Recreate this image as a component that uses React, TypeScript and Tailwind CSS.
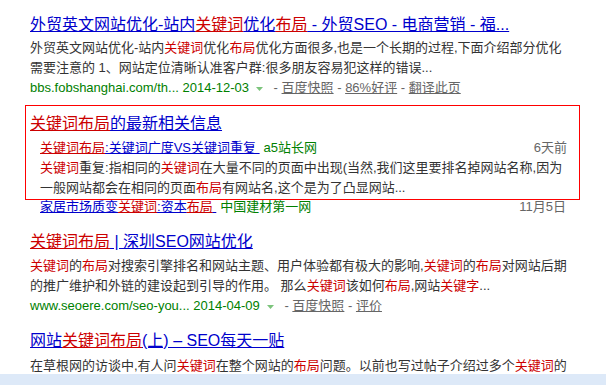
import React from "react";

const R = ({ children }: { children: React.ReactNode }) => (
  <span className="text-[#cc0000]">{children}</span>
);

const TR = ({ children }: { children: React.ReactNode }) => (
  <span className="text-[#cc0000] underline">{children}</span>
);

const Arrow = () => (
  <svg width="7" height="4" viewBox="0 0 7 4" className="mx-[7px] inline-block align-middle">
    <path d="M0 0 H7 L3.5 4 Z" fill="#7cc47c" />
  </svg>
);

const Sep = () => <span className="text-[#666]"> - </span>;

const Gray = ({ children }: { children: React.ReactNode }) => (
  <span className="text-[#666] underline">{children}</span>
);

const App = () => {
  return (
    <div className="relative h-[385px] w-[606px] overflow-hidden bg-white pl-[25px] pt-[14px] font-['Liberation_Sans','Noto_Sans_CJK_SC',sans-serif]">
      {/* result 1 */}
      <div className="ml-[5px]">
        <div className="whitespace-nowrap text-[16px] leading-[22px] text-[#0000cc] underline">
          外贸英文网站优化-站内<TR>关键词</TR>优化<TR>布局</TR> - 外贸SEO - 电商营销 - 福...
        </div>
        <div className="mt-[2px] whitespace-nowrap text-[13px] leading-[20px] text-[#333]">
          <div>
            外贸英文网站优化-站内<R>关键词</R>优化<R>布局</R>优化方面很多,也是一个长期的过程,下面介绍部分优化
          </div>
          <div>需要注意的 1、网站定位清晰认准客户群:很多朋友容易犯这样的错误...</div>
        </div>
        <div className="whitespace-nowrap text-[13px] leading-[20px]">
          <span className="text-[#008000]">bbs.fobshanghai.com/th... 2014-12-03</span>
          <Arrow />
          <Sep />
          <Gray>百度快照</Gray>
          <Sep />
          <Gray>86%好评</Gray>
          <Sep />
          <Gray>翻译此页</Gray>
        </div>
      </div>

      {/* news box */}
      <div className="mt-[7px] w-[555px] bg-[#ff0000] p-[1px]">
        <div className="bg-white pb-[1px] pl-[4px] pt-[7px]">
          <div className="whitespace-nowrap text-[16px] leading-[22px] text-[#0000cc] underline">
            <TR>关键词布局</TR>的最新相关信息
          </div>
          <div className="mt-[3px] flex justify-between whitespace-nowrap pl-[10px] pr-[12px] text-[13px] leading-[20px]">
            <div>
              <span className="text-[#0000cc] underline">
                <TR>关键词布局</TR>:关键词广度VS关键词重复{" "}
              </span>
              <span className="ml-[4px] text-[#008000]">a5站长网</span>
            </div>
            <span className="text-[#666]">6天前</span>
          </div>
          <div className="whitespace-nowrap pl-[10px] text-[13px] leading-[20px] text-[#333]">
            <div>
              <R>关键词</R>重复:指相同的<R>关键词</R>在大量不同的页面中出现(当然,我们这里要排名掉网站名称,因为
            </div>
            <div>
              一般网站都会在相同的页面<R>布局</R>有网站名,这个是为了凸显网站...
            </div>
          </div>
        </div>
      </div>
      <div className="-mt-[3px] flex w-[555px] justify-between whitespace-nowrap pl-[15px] pr-[14px] text-[13px] leading-[20px]">
        <div>
          <span className="text-[#0000cc] underline">
            家居市场质变<TR>关键词</TR>:资本<TR>布局</TR>{" "}
          </span>
          <span className="ml-[4px] text-[#008000]">中国建材第一网</span>
        </div>
        <span className="text-[#666]">11月5日</span>
      </div>

      {/* result 3 */}
      <div className="ml-[5px] mt-[14px]">
        <div className="whitespace-nowrap text-[16px] leading-[22px] text-[#0000cc] underline">
          <TR>关键词布局</TR> | 深圳SEO网站优化
        </div>
        <div className="mt-[3px] whitespace-nowrap text-[13px] leading-[20px] text-[#333]">
          <div>
            <R>关键词</R>的<R>布局</R>对搜索引擎排名和网站主题、用户体验都有极大的影响,<R>关键词</R>的<R>布局</R>对网站后期
          </div>
          <div>
            的推广维护和外链的建设起到引导的作用。 那么<R>关键词</R>该如何<R>布局</R>,网站<R>关键字</R>...
          </div>
        </div>
        <div className="whitespace-nowrap text-[13px] leading-[20px]">
          <span className="text-[#008000]">www.seoere.com/seo-you... 2014-04-09</span>
          <Arrow />
          <Sep />
          <Gray>百度快照</Gray>
          <Sep />
          <Gray>评价</Gray>
        </div>
      </div>

      {/* result 4 */}
      <div className="ml-[5px] mt-[14px]">
        <div className="whitespace-nowrap text-[16px] leading-[22px] text-[#0000cc] underline">
          网站<TR>关键词布局</TR>(上) – SEO每天一贴
        </div>
        <div className="mt-[4px] whitespace-nowrap text-[13px] leading-[20px] text-[#333]">
          在草根网的访谈中,有人问<R>关键词</R>在整个网站的<R>布局</R>问题。以前也写过帖子介绍过多个<R>关键词</R>的
        </div>
      </div>

      <div className="absolute bottom-0 left-0 h-[11px] w-full bg-[#dde9f8]" />
    </div>
  );
};

export default App;
